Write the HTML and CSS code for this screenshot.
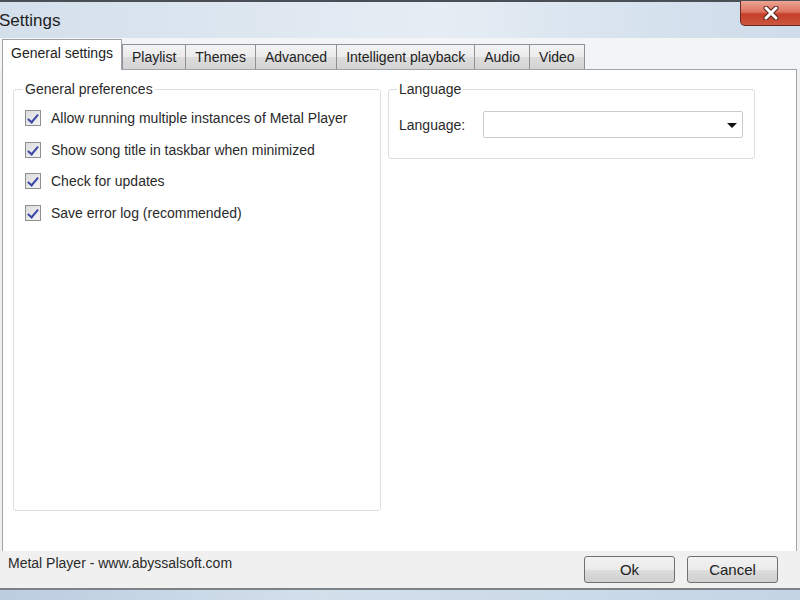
FILE: index.html
```html
<!DOCTYPE html>
<html lang="en">
<head>
    <meta charset="UTF-8">
    <meta name="viewport" content="width=device-width, initial-scale=1.0">
    <title>Settings</title>
    <link rel="stylesheet" href="styles.css">
</head>
<body>
    <div class="window">
        <div class="titlebar">
            <div class="title">Settings</div>
            <button class="close-btn">
                <svg width="16" height="14" viewBox="0 0 16 14">
                    <path d="M3 2 L13 12 M13 2 L3 12" stroke="#5a2018" stroke-width="5" stroke-linecap="round"/>
                    <path d="M3 2 L13 12 M13 2 L3 12" stroke="#ffffff" stroke-width="3" stroke-linecap="round"/>
                </svg>
            </button>
        </div>

        <div class="tabs">
            <div class="tab active">General settings</div>
            <div class="tab">Playlist</div>
            <div class="tab">Themes</div>
            <div class="tab">Advanced</div>
            <div class="tab">Intelligent playback</div>
            <div class="tab">Audio</div>
            <div class="tab">Video</div>
        </div>

        <div class="panel">
            <fieldset class="group group-prefs">
                <legend>General preferences</legend>
                <label class="check-row"><span class="check"></span>Allow running multiple instances of Metal Player</label>
                <label class="check-row"><span class="check"></span>Show song title in taskbar when minimized</label>
                <label class="check-row"><span class="check"></span>Check for updates</label>
                <label class="check-row"><span class="check"></span>Save error log (recommended)</label>
            </fieldset>

            <fieldset class="group group-lang">
                <legend>Language</legend>
                <div class="field-row">
                    <span class="field-label">Language:</span>
                    <div class="combo"><span class="combo-arrow"></span></div>
                </div>
            </fieldset>
        </div>

        <div class="footer">
            <div class="footer-text">Metal Player - www.abyssalsoft.com</div>
            <div class="buttons">
                <button class="btn">Ok</button>
                <button class="btn">Cancel</button>
            </div>
        </div>

        <div class="frame-bottom"></div>
    </div>
</body>
</html>
```

FILE: styles.css
```css
* {
    margin: 0;
    padding: 0;
    box-sizing: border-box;
}

body {
    font-family: 'Liberation Sans', Arial, sans-serif;
    font-size: 14px;
    color: #2a2a2a;
    background: #f0f0f0;
}

.window {
    width: 800px;
    height: 600px;
    display: flex;
    flex-direction: column;
    overflow: hidden;
}

/* title bar */
.titlebar {
    height: 38px;
    display: flex;
    justify-content: space-between;
    align-items: flex-start;
    border-top: 2px solid #4a4f55;
    background: linear-gradient(90deg, #d3dfeb 0%, #dfe8f1 35%, #e6edf4 55%, #d6e2ee 80%, #cfdce9 100%);
}

.title {
    font-size: 17px;
    color: #1e1e1e;
    padding-top: 9px;
    margin-left: -1px;
}

.close-btn {
    width: 62px;
    height: 25px;
    margin-top: -1px;
    margin-right: -2px;
    display: flex;
    align-items: center;
    justify-content: center;
    border: 1px solid #6b2a22;
    border-top: none;
    border-radius: 0 0 0 5px;
    background: linear-gradient(180deg, #eca594 0%, #dc7460 45%, #c63f29 55%, #cc573f 100%);
}

/* tabs */
.tabs {
    height: 31px;
    display: flex;
    align-items: flex-end;
    padding-left: 2px;
    background: #f2f4f6;
}

.tab {
    height: 25px;
    padding: 4px 9px 0;
    margin-left: -1px;
    border: 1px solid #8e9296;
    border-bottom: none;
    background: linear-gradient(180deg, #f3f3f3 0%, #ebebeb 50%, #dcdcdc 51%, #d4d4d4 100%);
    font-size: 14px;
    color: #222;
}

.tab.active {
    height: 31px;
    margin-left: 0;
    margin-right: 1px;
    margin-bottom: -1px;
    padding: 5px 8px 0;
    background: #fff;
    border-color: #a0a4a8;
    position: relative;
    z-index: 1;
}

/* tab page */
.panel {
    flex: 1;
    margin: 0 3px 0 2px;
    padding: 11px 10px 0 10px;
    background: #fff;
    border: 1px solid #a0a4a8;
    border-bottom: none;
    display: grid;
    grid-template-columns: 368px 367px;
    column-gap: 7px;
    align-items: start;
}

.group {
    border: 1px solid #d9dfe3;
    border-radius: 3px;
}

.group legend {
    padding: 0 2px;
    margin-left: -2px;
    font-size: 14px;
    line-height: 17px;
}

.group-prefs {
    height: 430px;
    padding: 5px 11px 0;
}

.check-row {
    display: flex;
    align-items: center;
    height: 31.5px;
    gap: 10px;
    padding-bottom: 1px;
}

.check {
    width: 16px;
    height: 16px;
    flex: none;
    border: 1px solid #8e8f8f;
    background: linear-gradient(135deg, #dcdcdc 0%, #f4f4f4 100%);
    position: relative;
}

.check::after {
    content: '';
    position: absolute;
    left: 4px;
    top: 1px;
    width: 4px;
    height: 9px;
    border: solid #3c48a8;
    border-width: 0 2px 2px 0;
    transform: rotate(40deg);
}

.group-lang {
    height: 78px;
    padding: 13px 11px 0 10px;
}

.field-row {
    display: flex;
    align-items: center;
    gap: 14px;
}

.field-label {
    width: 70px;
}

.combo {
    width: 260px;
    height: 27px;
    border: 1px solid #c9cbcd;
    border-radius: 2px;
    background: #fff;
    position: relative;
}

.combo-arrow {
    position: absolute;
    right: 5px;
    top: 11px;
    border-left: 5px solid transparent;
    border-right: 5px solid transparent;
    border-top: 5px solid #111;
}

/* footer bar */
.footer {
    height: 37px;
    flex: none;
    display: flex;
    justify-content: space-between;
    align-items: flex-start;
    padding: 0 22px 0 8px;
    background: #f0f0f0;
}

.footer-text {
    font-size: 14px;
    color: #2a2a2a;
    padding-top: 4px;
}

.buttons {
    display: flex;
    gap: 12px;
    padding-top: 5px;
}

.btn {
    width: 91px;
    height: 27px;
    border: 1px solid #707070;
    border-radius: 3px;
    background: linear-gradient(180deg, #f2f2f2 0%, #ebebeb 50%, #dddddd 51%, #cfcfcf 100%);
    font-family: 'Liberation Sans', Arial, sans-serif;
    font-size: 15px;
    color: #222;
}

.frame-bottom {
    flex: none;
    height: 12px;
    border-top: 2px solid #7c8288;
    background: linear-gradient(90deg, #bccde0 0%, #d3e0ec 40%, #c4d4e5 100%);
}
```
